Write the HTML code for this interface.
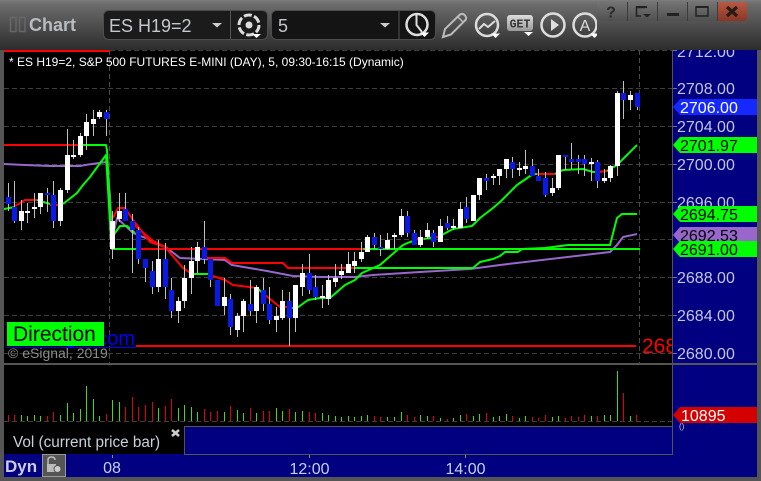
<!DOCTYPE html>
<html><head><meta charset="utf-8"><style>html,body{margin:0;padding:0;background:#000;width:761px;height:481px;overflow:hidden}svg{display:block;font-family:"Liberation Sans",sans-serif}</style></head><body>
<svg width="761" height="481" viewBox="0 0 761 481" xmlns="http://www.w3.org/2000/svg">
<defs>
<linearGradient id="tb" x1="0" y1="0" x2="0" y2="1"><stop offset="0" stop-color="#7d7d7d"/><stop offset=".08" stop-color="#6c6c6c"/><stop offset="1" stop-color="#2c2c2c"/></linearGradient>
<linearGradient id="wb" x1="0" y1="0" x2="0" y2="1"><stop offset="0" stop-color="#747474"/><stop offset="1" stop-color="#505050"/></linearGradient>
<linearGradient id="wx" x1="0" y1="0" x2="0" y2="1"><stop offset="0" stop-color="#b85a44"/><stop offset="1" stop-color="#8a3524"/></linearGradient>
<linearGradient id="get" x1="0" y1="0" x2="0" y2="1"><stop offset="0" stop-color="#ddd"/><stop offset="1" stop-color="#999"/></linearGradient>
<clipPath id="ax"><rect x="673" y="50" width="84" height="313"/></clipPath>
<clipPath id="ch"><rect x="4" y="50" width="668" height="313"/></clipPath>
<clipPath id="icon"><rect x="440" y="5" width="157" height="40"/></clipPath>
</defs>
<rect width="761" height="481" fill="#555"/>
<rect x="0" y="0" width="761" height="50" fill="url(#tb)"/>
<rect x="4" y="50" width="668" height="313" fill="#000"/>
<rect x="672" y="50" width="85" height="427" fill="#000080"/>
<rect x="4" y="365" width="668" height="61" fill="#000"/>
<rect x="4" y="426" width="180" height="28" fill="#000"/>
<rect x="184" y="426" width="488" height="28" fill="#000080"/>
<rect x="4" y="454" width="753" height="23" fill="#000080"/>
<rect x="4" y="363" width="753" height="2" fill="#555"/>
<path d="M672.5 50V454.5H184.5V426.5H672" fill="none" stroke="#555" stroke-width="1"/>

<!-- toolbar -->
<g fill="none" stroke="#666" stroke-width="1.5"><rect x="10.5" y="17.5" width="5.5" height="14"/><rect x="19.5" y="17.5" width="5.5" height="14"/></g>
<text x="29" y="31" font-size="18" font-weight="bold" fill="#b8bcc0">Chart</text>
<rect x="103.5" y="10.5" width="164" height="29" rx="5" fill="#1b1b1b" stroke="#4d4d4d"/>
<path d="M230.5 11V39" stroke="#555"/>
<text x="109" y="32" font-size="18" fill="#c4c8cc">ES H19=2</text>
<path d="M212 23h10l-5 4.500z" fill="#ccc"/>
<circle cx="249" cy="25" r="10" fill="none" stroke="#ddd" stroke-width="3" stroke-dasharray="8 2.400"/>
<circle cx="249" cy="25" r="3.500" fill="#ddd"/>
<path d="M252 34h9l-4.500 4z" fill="#fff"/>
<rect x="271.500" y="10.500" width="164" height="29" rx="5" fill="#141414" stroke="#4d4d4d"/>
<path d="M399 11V39" stroke="#555"/>
<text x="278" y="32" font-size="18" fill="#c4c8cc">5</text>
<path d="M380 23h10l-5 4.500z" fill="#ccc"/>
<circle cx="417" cy="24.500" r="10.500" fill="none" stroke="#ddd" stroke-width="2.500"/>
<path d="M416.500 15V25L422 32" fill="none" stroke="#ddd" stroke-width="2"/>
<path d="M420 32.500h9l-4.500 4.500z" fill="#fff"/>
<path d="M443 37L445 29L460 14.500Q463 13 465 15.500Q467 18 465.500 20L451 34.500z" fill="none" stroke="#bbb" stroke-width="2"/>
<path d="M458 17L463 22" stroke="#bbb" stroke-width="1.500"/>
<circle cx="487" cy="25" r="11" fill="none" stroke="#ddd" stroke-width="2.500"/>
<path d="M479 29L484 24L488 27L495 21" fill="none" stroke="#ddd" stroke-width="2"/>
<path d="M491 33.500h9l-4.500 4.500z" fill="#fff"/>
<rect x="507" y="15" width="26" height="16" rx="3" fill="url(#get)"/>
<text x="520" y="27.500" font-size="11.500" font-weight="bold" fill="#333" text-anchor="middle" font-family="Liberation Mono, monospace">GET</text>
<path d="M524 32h9l-4.500 4z" fill="#fff"/>
<circle cx="553" cy="25" r="11.500" fill="none" stroke="#ddd" stroke-width="2.500"/>
<path d="M551 19L559 25L551 31z" fill="#ddd"/>
<g clip-path="url(#icon)"><circle cx="585" cy="25" r="11.500" fill="none" stroke="#ddd" stroke-width="2.500"/>
<text x="585" y="31" font-size="16" fill="#ddd" text-anchor="middle">A</text>
<path d="M590 33.500h9l-4.500 4.500z" fill="#fff"/></g>
<path d="M597 2H747V17Q747 21 743 21H601Q597 21 597 17z" fill="url(#wb)"/>
<path d="M717 2H747V17Q747 21 743 21H717z" fill="url(#wx)"/>
<path d="M627.500 2V21M657.500 2V21M687.500 2V21M717.500 2V21" stroke="#3c3c3c"/>
<text x="611" y="17.500" font-size="16" font-weight="bold" fill="#2a2a2a" text-anchor="middle">?</text>
<path d="M645 7.500H636.500V16H641" fill="none" stroke="#222" stroke-width="1.500"/><path d="M643 14h8l-4 3.500z" fill="#222"/><path d="M636 6h11v2h-11z" fill="#222"/>
<rect x="667" y="13" width="12" height="3" fill="#222"/>
<rect x="696" y="7" width="12" height="9" fill="none" stroke="#222" stroke-width="1.500"/><rect x="696" y="6" width="12" height="2" fill="#222"/>
<path d="M727 7L737 16M737 7L727 16" stroke="#2a1a14" stroke-width="3.200"/>

<!-- grid -->
<path d="M4 88.500H672M4 126.500H672M4 164.500H672M4 202.500H672M4 239.500H672M4 277.500H672M4 315.500H672M4 353.500H672M110 50.500H672" stroke="#3e3e3e" stroke-dasharray="5 3" fill="none"/>
<path d="M109.500 50V363M639.500 50V363" stroke="#4a4a4a" stroke-dasharray="5 3" fill="none"/>
<rect x="4" y="50" width="106" height="2" fill="#f00"/>

<text x="9" y="66" font-size="12" fill="#fff">* ES H19=2, S&amp;P 500 FUTURES E-MINI (DAY), 5, 09:30-16:15 (Dynamic)</text>

<!-- indicator lines -->
<g fill="none" stroke-width="2" clip-path="url(#ch)" stroke-linejoin="round">
<path stroke="#9966cc" d="M4 164L25 165L50 166L80 166L85 165L106 162L107 166L110 195L112 240L117 218L133 233L153 241L167 248L180 258L225 260L232 265L267 271L293 276L320 277L355 277L373 275L420 272L470 269L500 265L610 252L617 245L623 237L637 234"/>
<path stroke="#f00" d="M4 145H83"/>
<path stroke="#0f0" d="M83 145H106L107 150L112 249H136"/>
<path stroke="#f00" d="M136 249H363"/>
<path stroke="#0f0" d="M363 249H640"/>
<path stroke="#f00" d="M203 258H225L232 263H283L288 268H355"/>
<path stroke="#0f0" d="M355 268H473L480 262L493 259L500 256L505 252H518L522 249"/>
<path stroke="#0f0" d="M522 249L545 248L568 245H610L617 218L622 214H637"/>
<path stroke="#f00" d="M133 224L153 241L167 248"/>
<path stroke="#0f0" d="M4 209L15 207"/>
<path stroke="#f00" d="M15 206L25 200H37"/>
<path stroke="#0f0" d="M37 200L50 204"/>
<path stroke="#f00" d="M50 205H63"/>
<path stroke="#0f0" d="M63 204L77 193L83 185L90 177L106 155L111 240L115 233L120 226H127L135 233"/>
<path stroke="#f00" d="M113 218L118 208H125L133 220L150 242L165 247L183 268L192 274"/>
<path stroke="#0f0" d="M192 274H208"/>
<path stroke="#f00" d="M208 274L213 276L225 280L233 285L257 288"/>
<path stroke="#0f0" d="M257 288L265 295"/>
<path stroke="#f00" d="M265 295L280 307H287"/>
<path stroke="#0f0" d="M287 308H297L308 300L320 298L330 298L345 285L355 280L362 273L380 265L403 245L410 242L417 240"/>
<path stroke="#f00" d="M417 239H424"/>
<path stroke="#0f0" d="M424 239L435 237"/>
<path stroke="#f00" d="M435 237H440"/>
<path stroke="#0f0" d="M440 236L453 229L472 226L480 218L493 208L500 202L517 185L533 174H537"/>
<path stroke="#f00" d="M537 174H555"/>
<path stroke="#0f0" d="M555 174L563 170L583 169L593 172H598"/>
<path stroke="#f00" d="M598 172L607 171"/>
<path stroke="#0f0" d="M607 171L617 165L637 145"/>
<path stroke="#f00" d="M136 346H636"/>
</g>

<!-- wicks -->
<path fill="none" stroke="#c0c0c0" shape-rendering="crispEdges" d="M8.500 183V211M14.500 181V223M21.500 200V230M27.500 203V223M34.500 193V218M40.500 193V214M47.500 188V212M53.500 181V228M60.500 188V226M67.500 129V193M73.500 140V159M80.500 133V157M86.500 114V150M93.500 110V136M99.500 110V119M106.500 110V136M112.500 211V259M119.500 193V222M125.500 193V221M132.500 214V273M138.500 227V264M145.500 259V282M152.500 261V294M158.500 240V292M165.500 243V299M171.500 278V318M178.500 297V323M184.500 265V308M191.500 247V294M197.500 242V273M204.500 221V264M210.500 259V287M217.500 280V306M224.500 278V315M230.500 294V335M237.500 313V337M243.500 299V332M250.500 280V316M256.500 285V323M263.500 278V311M269.500 287V324M276.500 307V332M282.500 290V320M289.500 292V346M295.500 285V332M302.500 264V296M309.500 254V294M315.500 275V300M322.500 285V308M328.500 275V305M335.500 264V287M341.500 264V279M348.500 252V273M354.500 252V273M361.500 242V262M367.500 235V252M374.500 233V249M380.500 235V256M387.500 233V250M394.500 233V249M401.500 209V237M407.500 211V237M414.500 230V245M420.500 230V247M427.500 223V239M433.500 230V247M440.500 219V242M447.500 216V230M453.500 219V230M460.500 202V228M466.500 197V223M473.500 195V221M479.500 178V200M486.500 174V190M493.500 174V185M499.500 169V185M506.500 159V178M512.500 157V178M519.500 162V176M525.500 150V174M532.500 159V176M538.500 169V181M545.500 172V197M552.500 178V196M558.500 155V190M565.500 155V170M571.500 143V169M578.500 155V174M584.500 155V176M591.500 158V181M597.500 160V188M604.500 169V183M610.500 165V182M617.500 91V176M623.500 81V119M630.500 91V110M637.500 93V110"/>
<!-- white bodies -->
<path fill="#fff" shape-rendering="crispEdges" d="M19 211h5v10h-5zM25 211h5v2h-5zM32 207h5v2h-5zM38 193h5v14h-5zM58 190h5v31h-5zM65 155h5v35h-5zM71 155h5v2h-5zM78 136h5v19h-5zM84 122h5v14h-5zM91 119h5v5h-5zM97 112h5v5h-5zM110 221h5v28h-5zM117 211h5v8h-5zM156 259h5v28h-5zM176 301h5v10h-5zM182 278h5v23h-5zM189 261h5v17h-5zM195 247h5v14h-5zM222 297h5v9h-5zM235 316h5v14h-5zM241 301h5v15h-5zM254 287h5v24h-5zM274 316h5v4h-5zM280 301h5v17h-5zM293 285h5v33h-5zM300 273h5v14h-5zM320 296h5v2h-5zM326 280h5v19h-5zM333 278h5v4h-5zM339 271h5v4h-5zM346 264h5v9h-5zM352 261h5v5h-5zM359 252h5v7h-5zM365 237h5v15h-5zM385 240h5v9h-5zM392 235h5v2h-5zM399 216h5v19h-5zM418 237h5v8h-5zM425 230h5v7h-5zM438 226h5v16h-5zM451 226h5v2h-5zM458 209h5v19h-5zM471 195h5v26h-5zM477 178h5v17h-5zM491 176h5v2h-5zM497 169h5v7h-5zM504 159h5v10h-5zM517 168h5v2h-5zM523 166h5v3h-5zM550 188h5v5h-5zM556 155h5v33h-5zM589 162h5v2h-5zM602 178h5v3h-5zM608 166h5v12h-5zM615 93h5v73h-5zM628 95h5v5h-5z"/>
<!-- blue bodies -->
<path fill="#0a1ae6" shape-rendering="crispEdges" d="M6 197h5v7h-5zM12 207h5v14h-5zM45 193h5v2h-5zM51 195h5v26h-5zM104 112h5v7h-5zM123 209h5v12h-5zM130 221h5v9h-5zM136 230h5v29h-5zM143 259h5v9h-5zM150 271h5v16h-5zM163 259h5v28h-5zM169 290h5v21h-5zM202 247h5v12h-5zM208 259h5v21h-5zM215 280h5v26h-5zM228 299h5v28h-5zM248 304h5v7h-5zM261 290h5v14h-5zM267 304h5v16h-5zM287 301h5v17h-5zM307 273h5v17h-5zM313 287h5v10h-5zM372 237h5v8h-5zM378 247h5v2h-5zM405 216h5v17h-5zM412 233h5v12h-5zM431 233h5v9h-5zM445 223h5v5h-5zM464 207h5v12h-5zM484 178h5v3h-5zM510 162h5v7h-5zM530 166h5v10h-5zM536 176h5v5h-5zM543 178h5v17h-5zM563 155h5v2h-5zM569 159h5v3h-5zM576 159h5v3h-5zM582 159h5v5h-5zM595 162h5v19h-5zM621 93h5v7h-5zM635 93h5v14h-5z"/>

<!-- direction / copyright -->
<text x="135" y="345" font-size="20" fill="#0000ff" text-anchor="end">com</text>
<rect x="7" y="347" width="129" height="1" fill="#0000ff"/>
<rect x="68" y="345" width="6" height="3" fill="#0000ff"/>
<rect x="7" y="322" width="97" height="24" fill="#0f0"/>
<text x="13" y="341" font-size="21" fill="#000">Direction</text>
<text x="8" y="358" font-size="14" fill="#8c8c8c">© eSignal, 2019</text>
<g clip-path="url(#ch)"><text x="642" y="353" font-size="21" fill="#f00">2680</text></g>

<!-- axis -->
<g stroke="#777" fill="none"><path d="M673 50.500h4M673 88.500h4M673 126.500h4M673 164.500h4M673 202.500h4M673 353.500h4M673 277.500h4M673 315.500h4"/></g>
<g font-size="16" fill="#c4c4de" clip-path="url(#ax)">
<text x="677" y="57">2712.00</text>
<text x="677" y="94">2708.00</text>
<text x="677" y="132">2704.00</text>
<text x="677" y="170">2700.00</text>
<text x="677" y="208">2696.00</text>
<text x="677" y="283">2688.00</text>
<text x="677" y="321">2684.00</text>
<text x="677" y="359">2680.00</text>
</g>
<path d="M673 107L680 99H757V115H680z" fill="#1428ff"/>
<text x="680" y="113" font-size="16" fill="#fff">2706.00</text>
<path d="M673 145L680 137H757V153H680z" fill="#0f0"/>
<text x="680" y="151" font-size="16" fill="#000">2701.97</text>
<path d="M673 214L680 206H757V222H680z" fill="#0f0"/>
<text x="680" y="220" font-size="16" fill="#000">2694.75</text>
<path d="M673 235L680 227H757V243H680z" fill="#9966cc"/>
<text x="680" y="241" font-size="16" fill="#000">2692.53</text>
<path d="M673 249L680 241H757V257H680z" fill="#0f0"/>
<text x="680" y="255" font-size="16" fill="#000">2691.00</text>

<!-- volume -->
<path d="M4 421.500H672" stroke="#3e3e3e" stroke-dasharray="5 3"/>
<path fill="none" stroke="#44dd00" shape-rendering="crispEdges" d="M21.500 421v-6M27.500 421v-5M34.500 421v-6M40.500 421v-5M60.500 421v-6M67.500 421v-18M73.500 421v-8M80.500 421v-12M86.500 421v-35M93.500 421v-22M99.500 421v-5M112.500 421v-21M119.500 421v-19M158.500 421v-13M178.500 421v-13M184.500 421v-16M191.500 421v-14M197.500 421v-9M224.500 421v-9M237.500 421v-11M243.500 421v-8M256.500 421v-8M276.500 421v-13M282.500 421v-10M295.500 421v-9M302.500 421v-10M322.500 421v-8M328.500 421v-6M335.500 421v-5M341.500 421v-4M348.500 421v-5M354.500 421v-4M361.500 421v-5M367.500 421v-6M387.500 421v-4M394.500 421v-4M401.500 421v-9M420.500 421v-6M427.500 421v-5M440.500 421v-3M453.500 421v-3M460.500 421v-6M473.500 421v-5M479.500 421v-7M493.500 421v-4M499.500 421v-5M506.500 421v-7M519.500 421v-3M525.500 421v-5M552.500 421v-4M558.500 421v-5M591.500 421v-5M604.500 421v-6M610.500 421v-6M617.500 421v-50M630.500 421v-5"/>
<path fill="none" stroke="#e40000" shape-rendering="crispEdges" d="M8.500 421v-6M14.500 421v-6M47.500 421v-5M53.500 421v-9M106.500 421v-7M125.500 421v-14M132.500 421v-24M138.500 421v-14M145.500 421v-16M152.500 421v-19M165.500 421v-15M171.500 421v-22M204.500 421v-12M210.500 421v-9M217.500 421v-10M230.500 421v-15M250.500 421v-13M263.500 421v-10M269.500 421v-10M289.500 421v-12M309.500 421v-9M315.500 421v-8M374.500 421v-5M380.500 421v-4M407.500 421v-6M414.500 421v-4M433.500 421v-5M447.500 421v-2M466.500 421v-7M486.500 421v-8M512.500 421v-5M532.500 421v-4M538.500 421v-3M545.500 421v-6M565.500 421v-3M571.500 421v-5M578.500 421v-4M584.500 421v-6M597.500 421v-5M623.500 421v-28M636.500 421v-6"/>
<text x="679" y="429" font-size="8" fill="#ccc">()</text>
<path d="M673 415L680 407H757V423H680z" fill="#d40000"/>
<text x="681" y="421" font-size="16" fill="#fff">10895</text>

<!-- bottom -->
<text x="13" y="447" font-size="15.300" fill="#c8d0dc">Vol (current price bar)</text>
<path d="M172 430L179 436M179 430L172 436" stroke="#ccc" stroke-width="2.500"/>
<text x="5" y="472" font-size="17" font-weight="bold" fill="#ccd">Dyn</text>
<rect x="42.500" y="454.500" width="23" height="22" fill="#555" stroke="#999"/>
<path d="M48 464V460Q48 457 51.500 457Q55 457 55 460" fill="none" stroke="#bbb" stroke-width="1.500"/><rect x="47" y="464" width="9" height="8" fill="#bbb"/><circle cx="57.500" cy="469" r="3.500" fill="#ccc" stroke="#555"/>
<path d="M112.500 455v3M309.500 455v3M465.500 455v3" stroke="#888"/>
<g font-size="16" fill="#c4d0e4" text-anchor="middle"><text x="112" y="473">08</text><text x="309.500" y="474">12:00</text><text x="465.500" y="474">14:00</text></g>
</svg>
</body></html>
